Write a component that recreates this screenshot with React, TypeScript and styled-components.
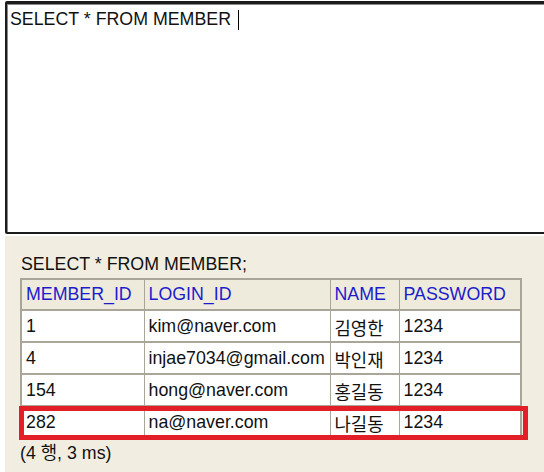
import React from "react";
import styled, { createGlobalStyle } from "styled-components";

const Global = createGlobalStyle`
  html, body {
    margin: 0;
    padding: 0;
    background: #ffffff;
    overflow: hidden;
  }
  body {
    font-family: "Liberation Sans", Arial, "Noto Sans CJK KR", sans-serif;
    font-size: 17.8px;
    color: #111;
  }
`;

const Page = styled.div`
  width: 544px;
  height: 472px;
  padding-left: 5px;
  padding-top: 1px;
  box-sizing: border-box;
  display: flex;
  flex-direction: column;
  gap: 2px;
`;

const Editor = styled.div`
  width: 560px;
  height: 233px;
  box-sizing: border-box;
  border: 2px solid #1c1c1c;
  border-top-width: 3px;
  border-radius: 2px 0 0 2px;
  box-shadow: inset 1px 1px 0 #8a8a8a;
  background: #fff;
  padding: 5px 3px;
  line-height: 21px;
  white-space: pre;
  display: flex;
  align-items: flex-start;
`;

const Caret = styled.span`
  display: inline-block;
  width: 1px;
  height: 20px;
  background: #000;
  margin-top: 1px;
  margin-left: 2px;
`;

const Result = styled.div`
  flex: 1;
  background: #f1eee1;
  padding: 17px 0 0 15px;
  display: flex;
  flex-direction: column;
  align-items: flex-start;
  position: relative;
`;

const Query = styled.div`
  line-height: 22px;
  margin-bottom: 3px;
  padding-left: 1px;
`;

const Table = styled.table`
  border-collapse: collapse;
  border: 2px solid #a9a598;
  background: #fff;
  table-layout: fixed;
`;

const Th = styled.th<{ $w: number }>`
  width: ${(p) => p.$w}px;
  height: 31px;
  box-sizing: border-box;
  padding: 0 4px;
  text-align: left;
  font-weight: normal;
  color: #1c1ccc;
  background: #eeebdd;
  border: 1px solid #a9a598;
  white-space: nowrap;
`;

const Td = styled.td`
  height: 32px;
  box-sizing: border-box;
  padding: 1px 4px 0;
  border: 1px solid #a9a598;
  border-top-width: 2px;
  white-space: nowrap;
  color: #111;
`;

const Highlight = styled.div`
  position: absolute;
  left: 14px;
  top: 170px;
  width: 509px;
  height: 34px;
  box-sizing: border-box;
  border: 5px solid #e21f27;
  pointer-events: none;
`;

const Footer = styled.div`
  margin-top: 3px;
  line-height: 22px;
`;

const columns = [
  { name: "MEMBER_ID", w: 123 },
  { name: "LOGIN_ID", w: 186 },
  { name: "NAME", w: 69 },
  { name: "PASSWORD", w: 122 },
];

const rows = [
  ["1", "kim@naver.com", "김영한", "1234"],
  ["4", "injae7034@gmail.com", "박인재", "1234"],
  ["154", "hong@naver.com", "홍길동", "1234"],
  ["282", "na@naver.com", "나길동", "1234"],
];

export default function App() {
  return (
    <>
      <Global />
      <Page>
        <Editor>
          {"SELECT * FROM MEMBER "}
          <Caret />
        </Editor>
        <Result>
          <Query>SELECT * FROM MEMBER;</Query>
          <Table>
            <thead>
              <tr>
                {columns.map((c) => (
                  <Th key={c.name} $w={c.w}>
                    {c.name}
                  </Th>
                ))}
              </tr>
            </thead>
            <tbody>
              {rows.map((r) => (
                <tr key={r[0]}>
                  {r.map((v, i) => (
                    <Td key={i}>{v}</Td>
                  ))}
                </tr>
              ))}
            </tbody>
          </Table>
          <Footer>(4 행, 3 ms)</Footer>
          <Highlight />
        </Result>
      </Page>
    </>
  );
}
